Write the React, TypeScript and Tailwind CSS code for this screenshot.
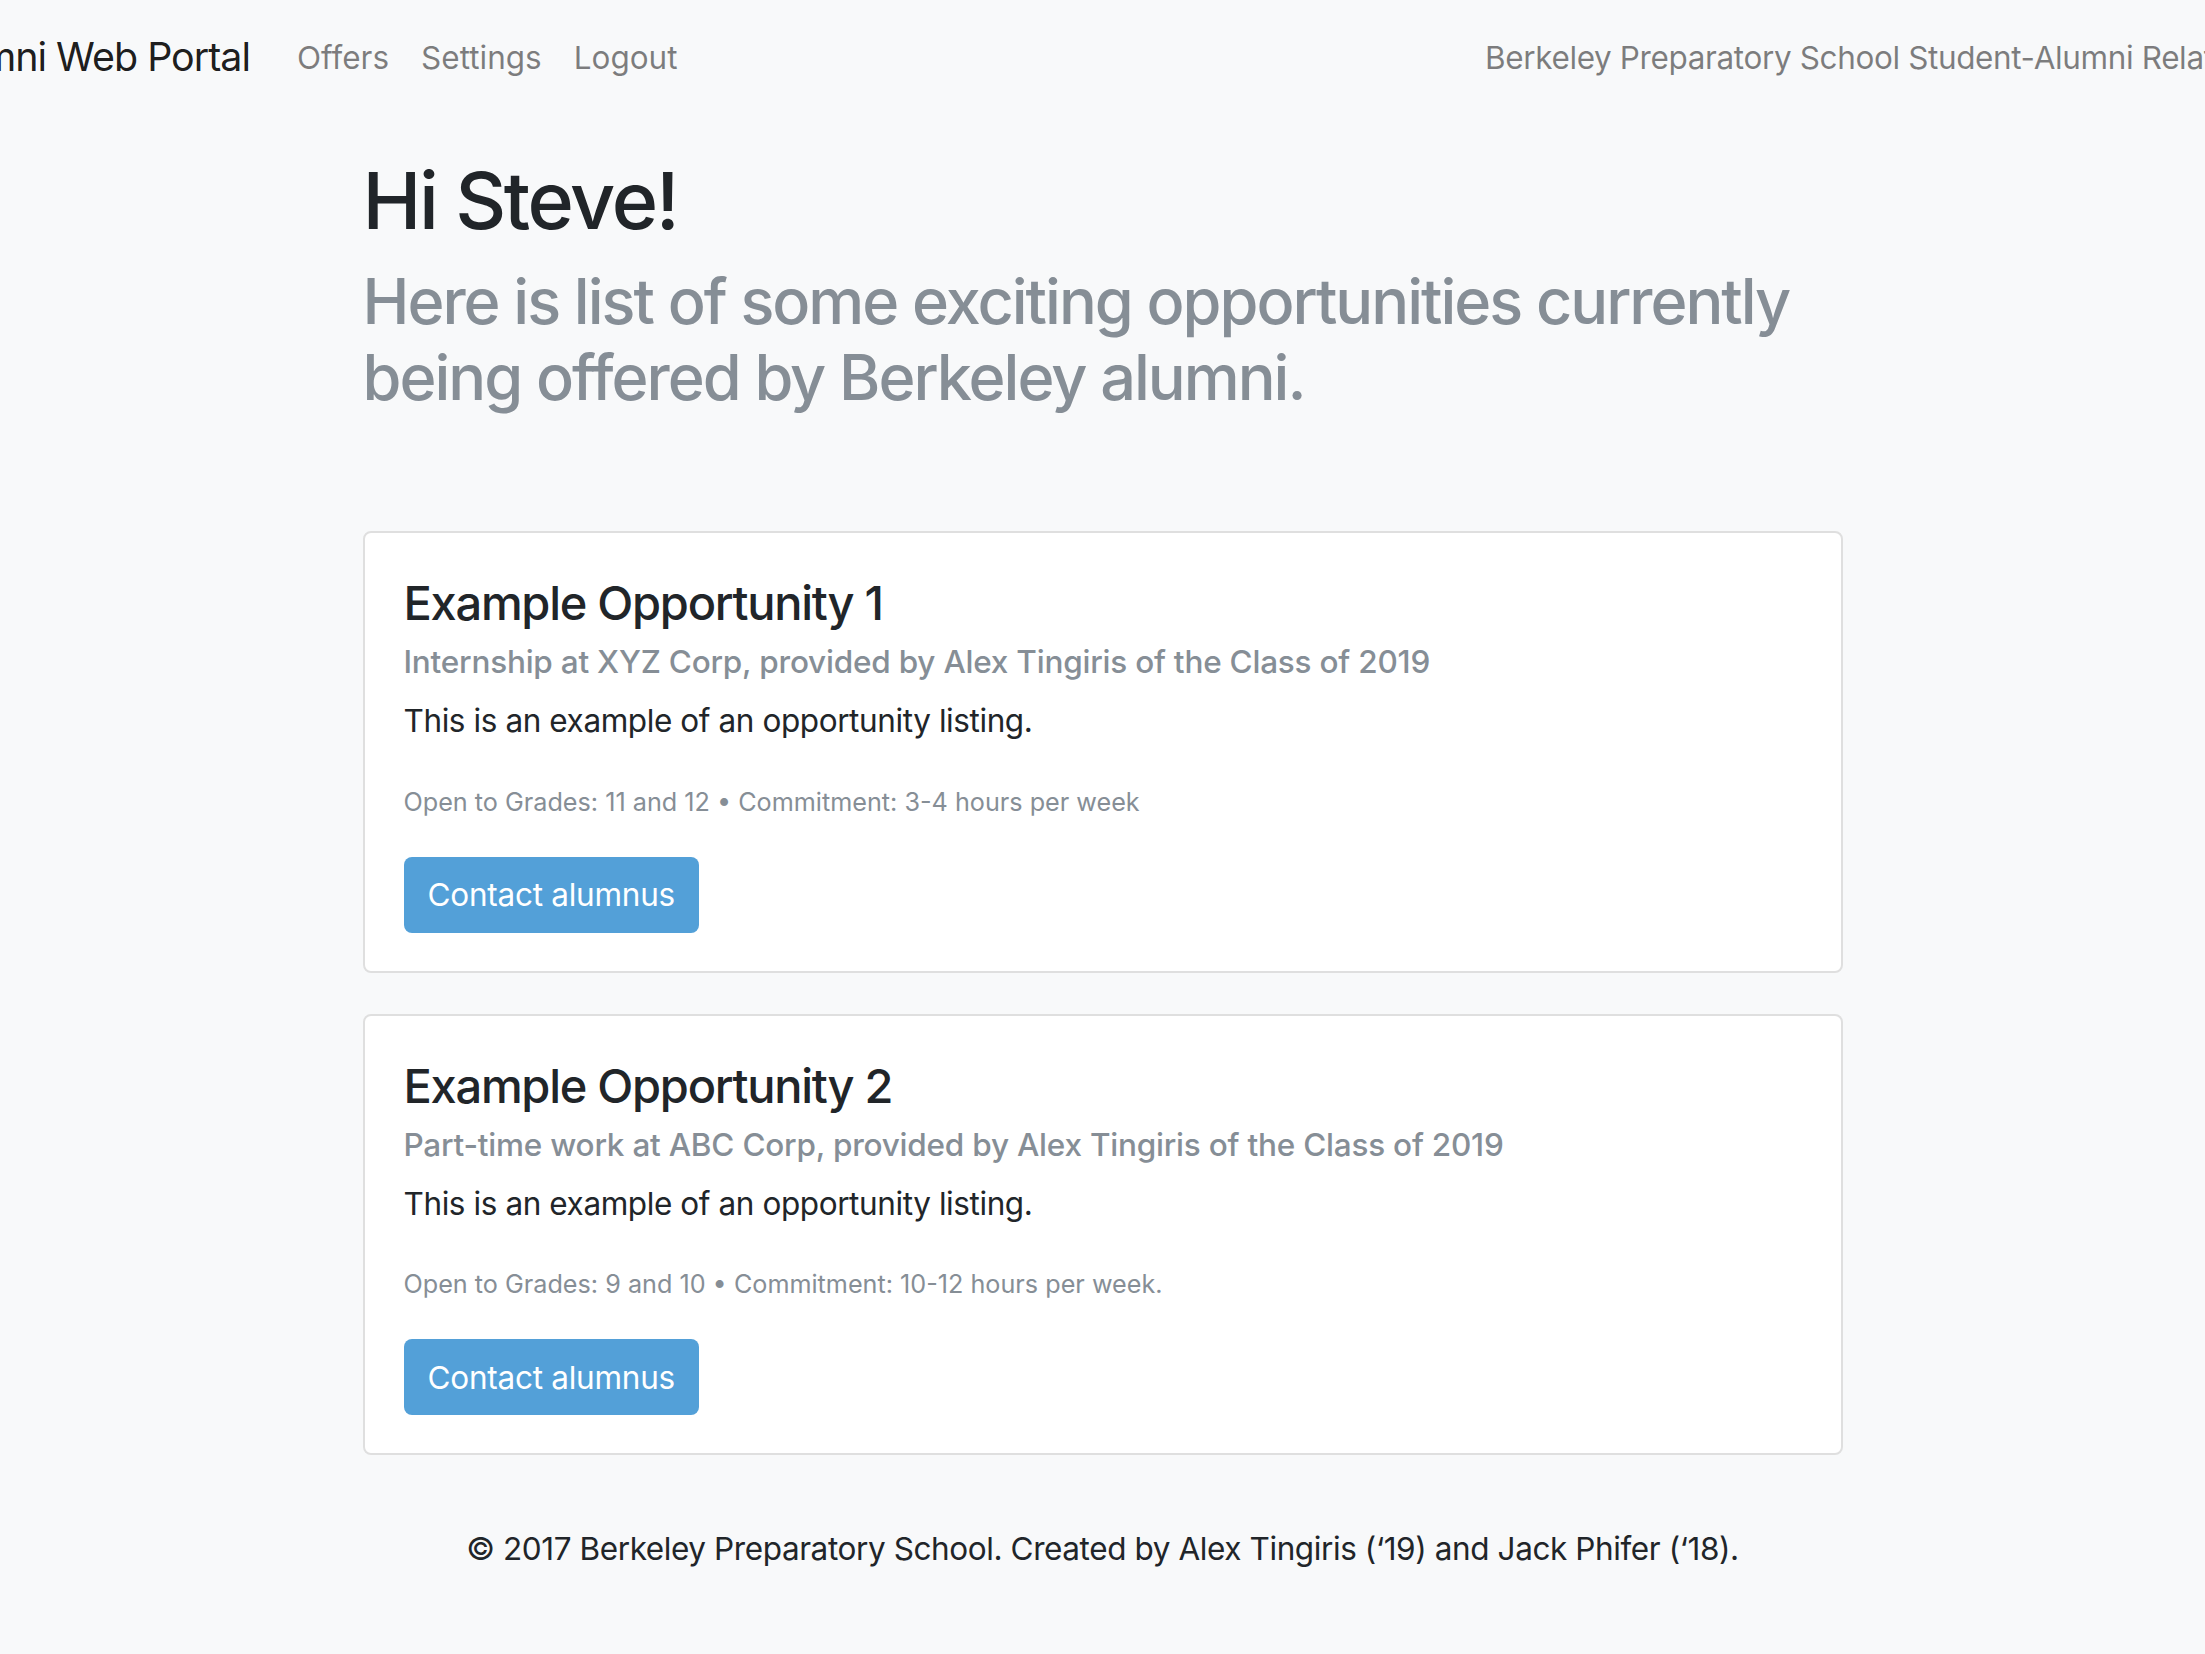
import React from 'react'

type Offer = {
  title: string
  subtitle: string
  body: string
  meta: string
}

const offers: Offer[] = [
  {
    title: 'Example Opportunity 1',
    subtitle: 'Internship at XYZ Corp, provided by Alex Tingiris of the Class of 2019',
    body: 'This is an example of an opportunity listing.',
    meta: 'Open to Grades: 11 and 12 • Commitment: 3-4 hours per week',
  },
  {
    title: 'Example Opportunity 2',
    subtitle: 'Part-time work at ABC Corp, provided by Alex Tingiris of the Class of 2019',
    body: 'This is an example of an opportunity listing.',
    meta: 'Open to Grades: 9 and 10 • Commitment: 10-12 hours per week.',
  },
]

function Navbar() {
  return (
    <nav className="flex items-center justify-between overflow-hidden py-[16px]">
      <div className="flex items-center">
        {/* brand runs off the left edge in the screenshot */}
        <a className="flex w-[250px] shrink-0 justify-end overflow-hidden whitespace-nowrap py-[12px] text-[39.4px] leading-[1.5] tracking-[-0.025em] text-[rgba(0,0,0,0.9)]">
          Alumni Web Portal
        </a>
        <ul className="ml-[31px] flex">
          {['Offers', 'Settings', 'Logout'].map((item) => (
            <li key={item}>
              <a className="block px-[16px] py-[16px] text-[31.5px] leading-[1.5] whitespace-nowrap text-[rgba(0,0,0,0.5)]">
                {item}
              </a>
            </li>
          ))}
        </ul>
      </div>
      <span className="w-[720px] shrink-0 overflow-hidden whitespace-nowrap text-[31.5px] leading-[1.5] tracking-[-0.012em] text-[rgba(0,0,0,0.5)]">
        Berkeley Preparatory School Student-Alumni Relations Program
      </span>
    </nav>
  )
}

function OfferCard({ offer }: { offer: Offer }) {
  return (
    <div className="rounded-[8px] border-[2px] border-[#dfdfdf] bg-white px-[39px] pt-[42px] pb-[38px]">
      <h4 className="mb-[12px] text-[47px] font-medium leading-[1.2] tracking-[-0.027em] text-[#212529]">
        {offer.title}
      </h4>
      <h6 className="mb-[16px] text-[31.5px] font-medium leading-[1.2] tracking-[-0.007em] text-[#868e96]">
        {offer.subtitle}
      </h6>
      <p className="mb-[31px] text-[31.5px] leading-[1.5] tracking-[-0.013em] text-[#212529]">{offer.body}</p>
      <p className="mb-[34px] text-[31.5px] leading-[1.5]">
        <small className="text-[25.2px] text-[#868e96]">{offer.meta}</small>
      </p>
      <button className="h-[76px] rounded-[8px] bg-[#53a0d8] px-[24px] text-[31.5px] leading-[1.5] tracking-[-0.008em] text-white">
        Contact alumnus
      </button>
    </div>
  )
}

export default function App() {
  return (
    <div
      className="min-h-[1654px] bg-[#f8f9fa] text-[#212529]"
      style={{ fontFamily: 'Inter, "Liberation Sans", sans-serif' }}
    >
      <Navbar />
      <main className="mx-auto w-[1480px] pt-[38px]">
        <h1 className="mb-[16px] text-[79px] font-medium leading-[1.2] tracking-[-0.03em] text-[#212529]">
          Hi Steve!
        </h1>
        <h2 className="text-[63px] font-medium leading-[1.2] tracking-[-0.032em] text-[#868e96]">
          Here is list of some exciting opportunities currently being offered by Berkeley alumni.
        </h2>

        <div className="mt-[116px] flex flex-col gap-[41px]">
          {offers.map((offer) => (
            <OfferCard key={offer.title} offer={offer} />
          ))}
        </div>

        <footer className="mt-[70px] pb-[40px] text-center text-[31.5px] leading-[1.5] tracking-[-0.013em] text-[#212529]">
          © 2017 Berkeley Preparatory School. Created by Alex Tingiris (‘19) and Jack Phifer (‘18).
        </footer>
      </main>
    </div>
  )
}
